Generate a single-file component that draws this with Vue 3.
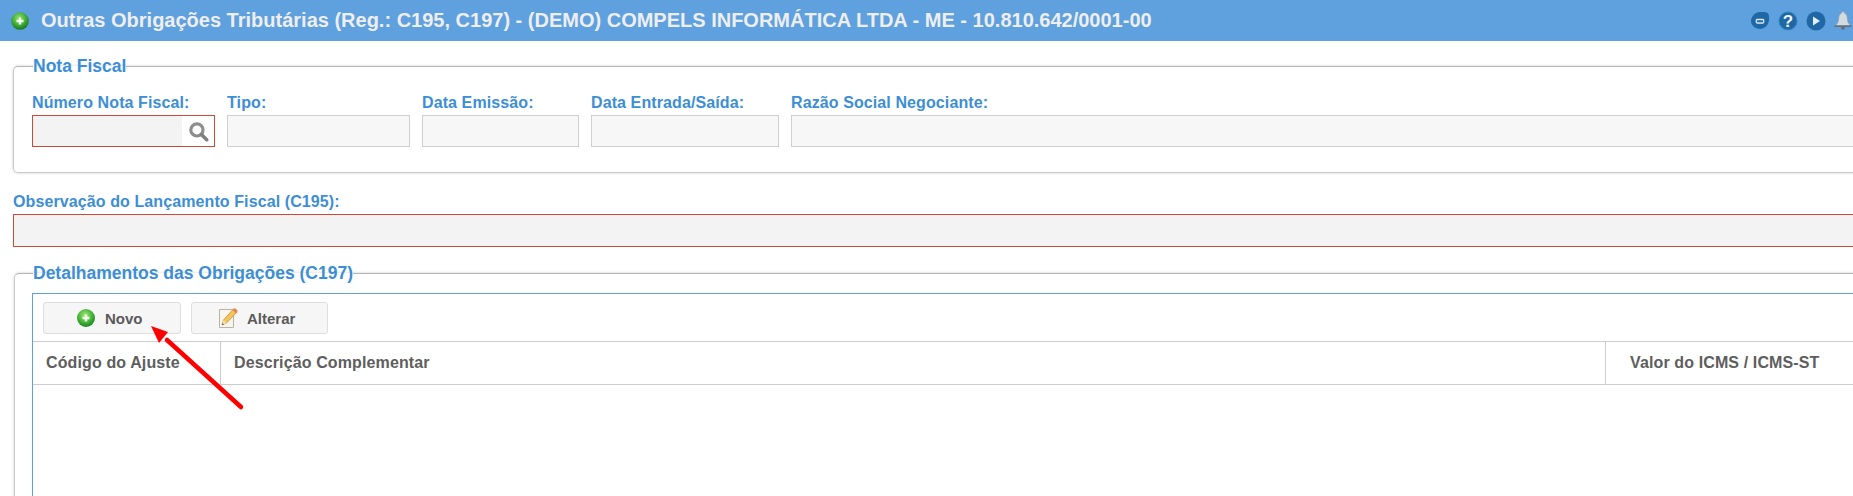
<template>
  <div class="page">
    <header class="topbar">
      <svg class="top-add" width="18" height="18" viewBox="0 0 18 18">
        <defs>
          <radialGradient id="greenTop" cx="45%" cy="35%" r="70%">
            <stop offset="0" stop-color="#9ce36d" />
            <stop offset="0.55" stop-color="#3fae35" />
            <stop offset="1" stop-color="#12691a" />
          </radialGradient>
        </defs>
        <circle cx="9" cy="9" r="8.800" fill="url(#greenTop)" />
        <path d="M9 5.500v7M5.500 9h7" stroke="#f2fff0" stroke-width="2.400" />
      </svg>
      <h1>{{ title }}</h1>
      <div class="top-icons">
        <svg width="20" height="20" viewBox="0 0 20 20">
          <path d="M10 1c4 0 9-1 9 5 1 7-4 12-9 12S1 14 1 10s4-9 9-9z" fill="#1f68a5" />
          <path d="M6.500 8.500h6.500M7 12h6M13 8.500c1 0 1 3.500 0 3.500M7 8.500c-1 0-1 3.500 0 3.500" stroke="#d8e8f5" stroke-width="1.300" fill="none" />
        </svg>
        <svg width="20" height="20" viewBox="0 0 20 20">
          <circle cx="10" cy="10" r="9" fill="#1f68a5" stroke="#2f86c0" />
          <text x="10" y="16" text-anchor="middle" class="help-mark">?</text>
        </svg>
        <svg width="20" height="20" viewBox="0 0 20 20">
          <circle cx="10" cy="10" r="9.500" fill="#1f68a5" />
          <path d="M7 5.500v9l7-4.500z" fill="#e3eff8" />
        </svg>
        <svg width="18" height="19" viewBox="0 0 18 19">
          <path d="M9 .5c1 0 1.400.7 1.400 1.600 2.200.8 2.800 3 3 5.500.2 2.700.7 4.400 2.300 6v1H2.300v-1c1.600-1.600 2.100-3.300 2.300-6 .2-2.500.8-4.700 3-5.500C7.600 1.200 8 .5 9 .5z" fill="#d3dbe2" stroke="#8b96a0" stroke-width=".7" />
          <path d="M.5 14.500h17V16H.5zM7 16h4l-.7 2.500H7.700z" fill="#626e78" />
        </svg>
      </div>
    </header>

    <main class="content">
      <fieldset class="group nota">
        <legend>Nota Fiscal</legend>
        <div class="field-row">
          <div v-for="f in fields" :key="f.label" class="field" :style="{ width: f.width + 'px' }">
            <label>{{ f.label }}</label>
            <div class="box" :class="{ required: f.search }">
              <span v-if="f.search" class="lookup">
                <svg width="21" height="21" viewBox="0 0 20 20">
                  <circle cx="8.500" cy="8.500" r="5.800" fill="none" stroke="#8c8c8c" stroke-width="3" />
                  <path d="M12.800 12.800l5 5" stroke="#808080" stroke-width="3.400" stroke-linecap="round" />
                </svg>
              </span>
            </div>
          </div>
        </div>
      </fieldset>

      <div class="obs">
        <label>Observação do Lançamento Fiscal (C195):</label>
        <div class="box required"></div>
      </div>

      <fieldset class="group detail">
        <legend>Detalhamentos das Obrigações (C197)</legend>
        <div class="grid">
          <div class="toolbar">
            <button class="btn btn-new" type="button">
              <svg width="20" height="20" viewBox="0 0 20 20">
                <defs>
                  <radialGradient id="greenBtn" cx="45%" cy="35%" r="70%">
                    <stop offset="0" stop-color="#a6e67a" />
                    <stop offset="0.55" stop-color="#45b53a" />
                    <stop offset="1" stop-color="#167a20" />
                  </radialGradient>
                </defs>
                <circle cx="10" cy="10" r="9" fill="url(#greenBtn)" />
                <path d="M10 6.500v7M6.500 10h7" stroke="#eefbe8" stroke-width="2.600" />
              </svg>
              <span>Novo</span>
            </button>
            <button class="btn btn-edit" type="button">
              <svg width="21" height="22" viewBox="0 0 21 22">
                <path d="M1.500 2.500h14v18h-14z" fill="#f7f5ee" stroke="#b9b4a6" />
                <path d="M4 18l1.500-5L15 2.500c1-1 2.300-1 3.300 0s1 2.300 0 3.300L8.500 16z" fill="#f2c45a" stroke="#c98f2c" stroke-width=".8" />
                <path d="M4 18l1.500-5 3 3z" fill="#f4dfbd" />
                <path d="M4 18l.6-2 1.400 1.400z" fill="#555" />
                <path d="M14.500 3l3.800 3.500 .6-1.200c.4-2.500-1.800-4-3.500-3.200z" fill="#e87f5b" />
              </svg>
              <span>Alterar</span>
            </button>
          </div>
          <div class="grid-head">
            <div class="col col-code">Código do Ajuste</div>
            <div class="col col-desc">Descrição Complementar</div>
            <div class="col col-value">Valor do ICMS / ICMS-ST</div>
          </div>
        </div>
      </fieldset>
    </main>

    <svg class="arrow" width="110" height="100" viewBox="0 0 110 100">
      <path d="M98 89L24 22" stroke="#f00" stroke-width="4.500" stroke-linecap="round" />
      <path d="M8 8L25 14L16 25z" fill="#f00" />
    </svg>
  </div>
</template>

<script setup>
const title = "Outras Obrigações Tributárias (Reg.: C195, C197) - (DEMO) COMPELS INFORMÁTICA LTDA - ME - 10.810.642/0001-00";

const fields = [
  { label: "Número Nota Fiscal:", width: 183, search: true },
  { label: "Tipo:", width: 183 },
  { label: "Data Emissão:", width: 157 },
  { label: "Data Entrada/Saída:", width: 188 },
  { label: "Razão Social Negociante:", width: 1200 },
];
</script>

<style>
html, body {
  overflow: hidden;
  background: #fff;
}
</style>

<style scoped>
.page {
  position: relative;
  width: 1853px;
  height: 496px;
  overflow: hidden;
  font-family: "Liberation Sans", Arial, sans-serif;
  background: #fff;
}

.topbar {
  height: 41px;
  background: #5fa0de;
  display: flex;
  align-items: center;
  padding-left: 11px;
  white-space: nowrap;
}

.topbar h1 {
  margin: 0 0 0 12px;
  font-size: 20px;
  font-weight: bold;
  color: #eeeeee;
}

.top-icons {
  margin-left: auto;
  display: flex;
  align-items: center;
  gap: 8px;
  margin-right: 1px;
  flex: none;
}

.help-mark {
  font: bold 17px "Liberation Sans", Arial, sans-serif;
  fill: #f0f6fb;
}

.content {
  width: 2000px;
  padding: 15px 0 0 13px;
}

.group {
  margin: 0;
  padding: 0;
  border: 1px solid #c9c9c9;
  border-top-color: #b5b5b5;
  border-radius: 5px;
  box-shadow: 0 0 3px rgba(0, 0, 0, .2);
  min-width: 0;
  box-sizing: border-box;
}

.group legend {
  padding: 0;
  font-size: 17.500px;
  line-height: 20px;
  font-weight: bold;
  color: #3c8ed6;
}

.nota {
  height: 117px;
}

.nota legend {
  margin-left: 19px;
}

.field-row {
  display: flex;
  gap: 12px;
  padding: 18px 0 0 18px;
}

.field {
  flex: none;
}

label {
  display: block;
  font-size: 16px;
  line-height: 18px;
  font-weight: bold;
  color: #3c8ed6;
  letter-spacing: .1px;
  margin-bottom: 3px;
}

.box {
  height: 32px;
  box-sizing: border-box;
  background: #f7f7f7;
  border: 1px solid #cfcfcf;
  display: flex;
  justify-content: flex-end;
}

.box.required {
  border-color: #cf4a35;
  background: #f3f3f3;
}

.lookup {
  width: 32px;
  background: #fff;
  display: flex;
  align-items: center;
  justify-content: center;
}

.obs {
  margin: 20px 0 0;
}

.obs .box {
  height: 33px;
}

.detail {
  margin: 16px 0 0 1px;
  height: 400px;
}

.detail legend {
  margin-left: 18px;
}

.grid {
  margin: 10px 0 0 17px;
  height: 300px;
  border: 1px solid #5fa0de;
  border-width: 1px 0 0 1px;
}

.toolbar {
  display: flex;
  gap: 10px;
  padding: 8px 10px 7px;
}

.btn {
  height: 32px;
  box-sizing: border-box;
  display: flex;
  align-items: center;
  padding: 0;
  border: 1px solid #dedede;
  border-radius: 3px;
  background: #f6f6f6;
  font: bold 15px "Liberation Sans", Arial, sans-serif;
  color: #5a5a5a;
}

.btn-new {
  width: 138px;
  padding-left: 32px;
  gap: 9px;
}

.btn-edit {
  width: 137px;
  padding-left: 26px;
  gap: 8px;
}

.grid-head {
  display: flex;
  height: 42px;
  border-top: 1px solid #cdcdcd;
  border-bottom: 1px solid #cdcdcd;
}

.col {
  display: flex;
  align-items: center;
  flex: none;
  font-size: 16px;
  font-weight: bold;
  color: #5e5e5e;
  letter-spacing: .12px;
}

.col-code {
  width: 188px;
  padding-left: 13px;
  box-sizing: border-box;
  border-right: 1px solid #cdcdcd;
}

.col-desc {
  width: 1385px;
  padding-left: 13px;
  box-sizing: border-box;
  border-right: 1px solid #cdcdcd;
}

.col-value {
  padding-left: 24px;
}

.arrow {
  position: absolute;
  left: 143px;
  top: 318px;
}
</style>
